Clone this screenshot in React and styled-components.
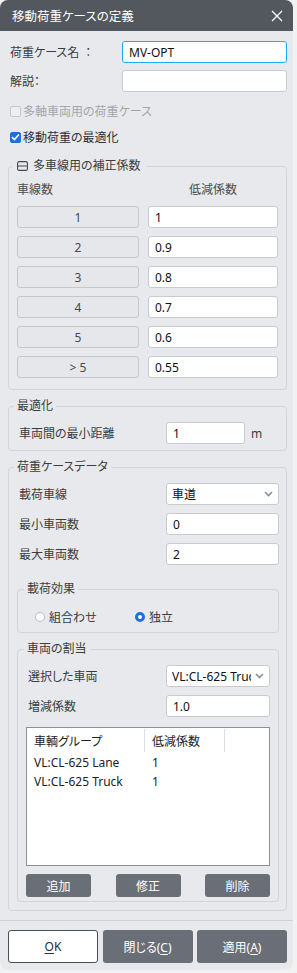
import React from "react";
import styled, { createGlobalStyle } from "styled-components";

const GlobalStyle = createGlobalStyle`
  html, body {
    margin: 0;
    padding: 0;
    background: #f2f2f3;
  }
  body {
    font-family: "Noto Sans", "Noto Sans CJK JP", sans-serif;
    font-size: 12px;
    color: #3a3d42;
    font-feature-settings: "palt";
  }
  * { box-sizing: border-box; }
`;

const Dialog = styled.div`
  width: 293px;
  height: 970px;
  background: #e8e9ec;
  border-radius: 8px;
  overflow: hidden;
  display: flex;
  flex-direction: column;
`;

const TitleBar = styled.div`
  flex: none;
  height: 31px;
  background: #53585f;
  color: #fff;
  display: flex;
  align-items: center;
  justify-content: space-between;
  padding: 0 10px 0 12px;
  font-size: 12.5px;
`;

const Body = styled.div`
  flex: 1;
  padding: 10px 6px 0 8px;
  display: flex;
  flex-direction: column;
`;

const FieldRow = styled.div`
  display: flex;
  align-items: center;
  height: 22px;
  margin-top: ${({ $mt }) => $mt || 0}px;
  padding-left: ${({ $pl }) => $pl || 0}px;
`;

const Label = styled.span`
  width: ${({ $w }) => $w}px;
  flex: none;
  white-space: nowrap;
`;

const Colon = styled.span`
  margin-left: ${({ $gap }) => $gap || 0}px;
`;

const TextBox = styled.input`
  width: ${({ $w }) => $w}px;
  height: 22px;
  flex: none;
  border: 1px solid ${({ $focus }) => ($focus ? "#17b0f0" : "#c8cbd0")};
  border-radius: 3px;
  background: #fff;
  padding: 0 6px;
  font: inherit;
  color: #111;
  outline: none;
`;

const SelectBox = styled.div`
  width: ${({ $w }) => $w}px;
  height: 22px;
  flex: none;
  border: 1px solid #c8cbd0;
  border-radius: 3px;
  background: #fff;
  display: flex;
  align-items: center;
  padding: 0 5px;
  color: #111;
  gap: 4px;
`;

const SelectText = styled.span`
  flex: 1;
  min-width: 0;
  overflow: hidden;
  white-space: nowrap;
`;

const Unit = styled.span`
  margin-left: 6px;
`;

const CheckRow = styled.div`
  display: flex;
  align-items: center;
  gap: 2px;
  height: 20px;
  margin-top: ${({ $mt }) => $mt || 0}px;
  padding-left: 2px;
  color: ${({ $disabled }) => ($disabled ? "#a3a6ab" : "#2e3136")};
`;

const Box = styled.span`
  width: 11px;
  height: 11px;
  border-radius: 2px;
  flex: none;
  display: flex;
  align-items: center;
  justify-content: center;
  border: 1px solid ${({ $checked }) => ($checked ? "#1d6fe0" : "#c6c8cc")};
  background: ${({ $checked }) => ($checked ? "#1d6fe0" : "#eceef0")};
`;

const Group = styled.fieldset`
  margin: ${({ $mt }) => $mt || 0}px 0 0;
  padding: 0 ${({ $pr }) => $pr}px ${({ $pb }) => $pb}px ${({ $pl }) => $pl}px;
  border: 1px solid #d3d5d9;
  border-radius: 4px;
  min-width: 0;
`;

const Legend = styled.legend`
  padding: 0 ${({ $pad }) => $pad || 3}px;
  margin-left: ${({ $ml }) => $ml || 0}px;
  line-height: 16px;
  height: 16px;
  color: #3a3d42;
`;

const LegendInner = styled.span`
  display: inline-flex;
  align-items: center;
  gap: 5px;
`;

const FactorGrid = styled.div`
  display: grid;
  grid-template-columns: 122px 130px;
  column-gap: 9px;
  row-gap: 8px;
  margin-top: 8px;
`;

const ColHead = styled.div`
  height: 16px;
  line-height: 16px;
  text-align: ${({ $center }) => ($center ? "center" : "left")};
  color: #4a4e55;
`;

const LaneButton = styled.div`
  height: 22px;
  border: 1px solid #c4c7cc;
  border-radius: 3px;
  background: #e6e7ea;
  display: flex;
  align-items: center;
  justify-content: center;
  color: #45484e;
`;

const GridInput = styled(TextBox)`
  width: 130px;
`;

const RadioRow = styled.div`
  display: flex;
  align-items: center;
  height: 20px;
  margin-top: 10px;
  padding-left: 7px;
`;

const RadioItem = styled.label`
  display: flex;
  align-items: center;
  gap: 4px;
  width: ${({ $w }) => $w || "auto"};
`;

const RadioDot = styled.span`
  width: 10px;
  height: 10px;
  border-radius: 50%;
  flex: none;
  background: #fff;
  border: ${({ $on }) => ($on ? "3px solid #1d6fe0" : "1px solid #b9bcc1")};
`;

const ListBox = styled.div`
  margin-top: 10px;
  height: 139px;
  background: #fff;
  border: 1px solid #8d9197;
  display: flex;
  flex-direction: column;
`;

const ListRow = styled.div`
  display: grid;
  grid-template-columns: 118px 80px 1fr;
  height: ${({ $h }) => $h}px;
  align-items: center;
  color: #222;
`;

const ListCell = styled.div`
  padding-left: 7px;
  height: ${({ $head }) => ($head ? "23px" : "auto")};
  display: flex;
  align-items: center;
  white-space: nowrap;
  border-right: ${({ $sep }) => ($sep ? "1px solid #dcdee1" : "none")};
`;

const ActionRow = styled.div`
  display: flex;
  justify-content: space-between;
  margin-top: 8px;
`;

const DarkButton = styled.div`
  width: ${({ $w }) => $w}px;
  height: ${({ $h }) => $h}px;
  border-radius: 3px;
  background: #6a6f77;
  color: #fff;
  display: flex;
  align-items: center;
  justify-content: center;
  u {
    text-underline-offset: 2px;
  }
`;

const LightButton = styled(DarkButton)`
  background: #fff;
  border: 1px solid #4b4e54;
  color: #2a2d32;
`;

const Footer = styled.div`
  flex: none;
  margin-top: 8px;
  border-top: 1px solid #cfd1d5;
  padding: 9px 6px 7px 8px;
  display: flex;
  justify-content: space-between;
`;

const CloseIcon = () => (
  <svg width="12" height="12" viewBox="0 0 12 12">
    <path d="M1 1L11 11M11 1L1 11" stroke="#fff" strokeWidth="1.3" />
  </svg>
);

const CollapseIcon = () => (
  <svg width="11" height="10" viewBox="0 0 11 10">
    <rect x="0.6" y="0.6" width="9.8" height="8.8" rx="1.5" fill="none" stroke="#45484e" strokeWidth="1.1" />
    <path d="M0.6 5H10.4" stroke="#45484e" strokeWidth="1.1" />
  </svg>
);

const Chevron = () => (
  <svg width="9" height="6" viewBox="0 0 9 6">
    <path d="M1 1L4.5 4.5L8 1" fill="none" stroke="#8a8d92" strokeWidth="1.6" />
  </svg>
);

const Check = () => (
  <svg width="9" height="8" viewBox="0 0 9 8">
    <path d="M1 4.2L3.4 6.5L8 1.5" fill="none" stroke="#fff" strokeWidth="1.6" />
  </svg>
);

const factors = [
  ["1", "1"],
  ["2", "0.9"],
  ["3", "0.8"],
  ["4", "0.7"],
  ["5", "0.6"],
  ["> 5", "0.55"],
];

const vehicles = [
  ["VL:CL-625 Lane", "1"],
  ["VL:CL-625 Truck", "1"],
];

export default function App() {
  return (
    <>
      <GlobalStyle />
      <Dialog>
        <TitleBar>
          <span>移動荷重ケースの定義</span>
          <CloseIcon />
        </TitleBar>
        <Body>
          <FieldRow $pl={2}>
            <Label $w={112}>
              荷重ケース名<Colon $gap={6}>：</Colon>
            </Label>
            <TextBox $w={165} $focus defaultValue="MV-OPT" />
          </FieldRow>
          <FieldRow $pl={2} $mt={7}>
            <Label $w={112}>
              解説<Colon>：</Colon>
            </Label>
            <TextBox $w={165} defaultValue="" />
          </FieldRow>
          <CheckRow $disabled $mt={9}>
            <Box />
            多軸車両用の荷重ケース
          </CheckRow>
          <CheckRow $mt={6}>
            <Box $checked>
              <Check />
            </Box>
            移動荷重の最適化
          </CheckRow>

          <Group $mt={11} $pl={8} $pr={8} $pb={11}>
            <Legend $ml={-5} $pad={5}>
              <LegendInner>
                <CollapseIcon />
                多車線用の補正係数
              </LegendInner>
            </Legend>
            <FactorGrid>
              <ColHead>車線数</ColHead>
              <ColHead $center>低減係数</ColHead>
              {factors.map(([lane, value]) => (
                <React.Fragment key={lane}>
                  <LaneButton>{lane}</LaneButton>
                  <GridInput defaultValue={value} />
                </React.Fragment>
              ))}
            </FactorGrid>
          </Group>

          <Group $mt={8} $pl={8} $pr={7} $pb={6}>
            <Legend $ml={-3}>最適化</Legend>
            <FieldRow $pl={2} $mt={8}>
              <Label $w={147}>車両間の最小距離</Label>
              <TextBox $w={79} defaultValue="1" />
              <Unit>m</Unit>
            </FieldRow>
          </Group>

          <Group $mt={8} $pl={8} $pr={7} $pb={8}>
            <Legend $ml={-3}>荷重ケースデータ</Legend>
            <FieldRow $pl={2} $mt={8}>
              <Label $w={147}>載荷車線</Label>
              <SelectBox $w={113}>
                <SelectText>車道</SelectText>
                <Chevron />
              </SelectBox>
            </FieldRow>
            <FieldRow $pl={2} $mt={8}>
              <Label $w={147}>最小車両数</Label>
              <TextBox $w={113} defaultValue="0" />
            </FieldRow>
            <FieldRow $pl={2} $mt={8}>
              <Label $w={147}>最大車両数</Label>
              <TextBox $w={113} defaultValue="2" />
            </FieldRow>

            <Group $mt={16} $pl={10} $pr={8} $pb={5}>
              <Legend $ml={-4}>載荷効果</Legend>
              <RadioRow>
                <RadioItem $w="100px">
                  <RadioDot />
                  組合わせ
                </RadioItem>
                <RadioItem>
                  <RadioDot $on />
                  独立
                </RadioItem>
              </RadioRow>
            </Group>

            <Group $mt={8} $pl={8} $pr={8} $pb={4}>
              <Legend $ml={-2}>車両の割当</Legend>
              <FieldRow $pl={2} $mt={8}>
                <Label $w={138}>選択した車両</Label>
                <SelectBox $w={104}>
                  <SelectText>VL:CL-625 Truck</SelectText>
                  <Chevron />
                </SelectBox>
              </FieldRow>
              <FieldRow $pl={2} $mt={8}>
                <Label $w={138}>増減係数</Label>
                <TextBox $w={104} defaultValue="1.0" />
              </FieldRow>
              <ListBox>
                <ListRow $h={25}>
                  <ListCell $head $sep>車輌グループ</ListCell>
                  <ListCell $head $sep>低減係数</ListCell>
                  <ListCell $head />
                </ListRow>
                {vehicles.map(([name, factor]) => (
                  <ListRow $h={19} key={name}>
                    <ListCell>{name}</ListCell>
                    <ListCell>{factor}</ListCell>
                    <ListCell />
                  </ListRow>
                ))}
              </ListBox>
              <ActionRow>
                <DarkButton $w={65} $h={23}>追加</DarkButton>
                <DarkButton $w={65} $h={23}>修正</DarkButton>
                <DarkButton $w={65} $h={23}>削除</DarkButton>
              </ActionRow>
            </Group>
          </Group>
        </Body>
        <Footer>
          <LightButton $w={90} $h={33}>
            <span>
              <u>O</u>K
            </span>
          </LightButton>
          <DarkButton $w={90} $h={33}>
            <span>
              閉じる(<u>C</u>)
            </span>
          </DarkButton>
          <DarkButton $w={90} $h={33}>
            <span>
              適用(<u>A</u>)
            </span>
          </DarkButton>
        </Footer>
      </Dialog>
    </>
  );
}
